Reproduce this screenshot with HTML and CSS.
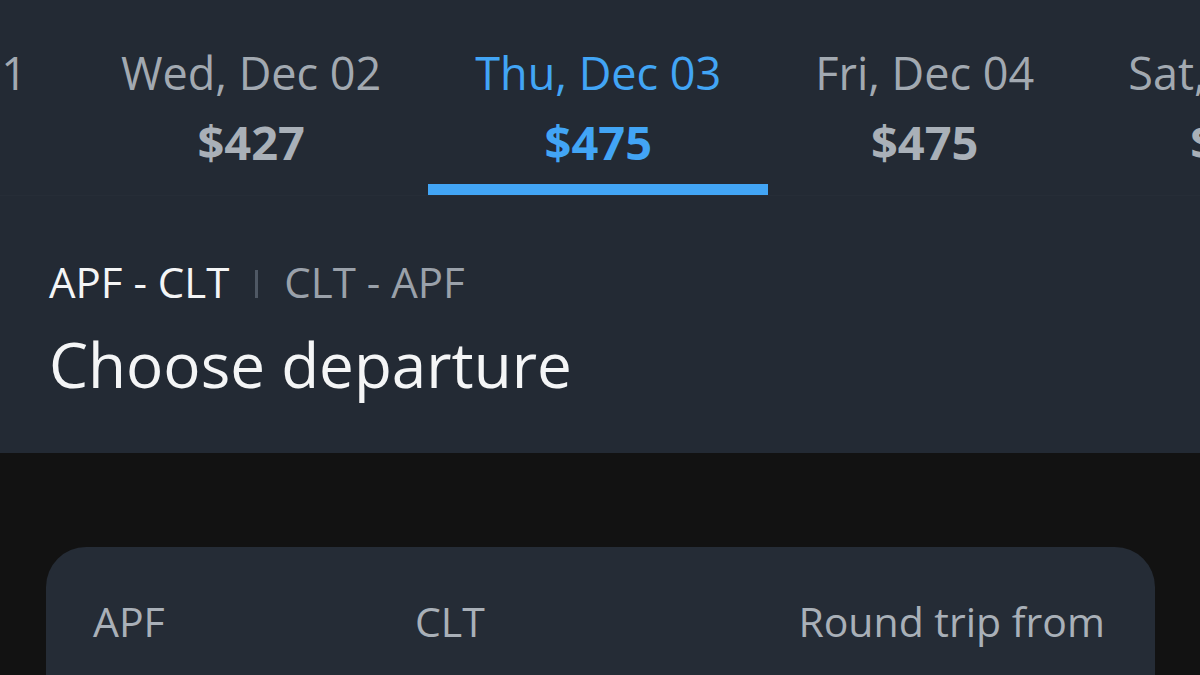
FILE: index.html
```html
<!DOCTYPE html>
<html lang="en">
<head>
  <meta charset="UTF-8" />
  <title>Choose departure</title>
  <link rel="stylesheet" href="styles.css">
</head>
<body>
  <header class="top">
    <nav class="dates">
      <div class="date-clip">
        <div class="tab">
          <div class="day">Tue, Dec 01</div>
          <div class="price">$427</div>
        </div>
      </div>
      <div class="tab">
        <div class="day">Wed, Dec 02</div>
        <div class="price">$427</div>
      </div>
      <div class="tab active">
        <div class="day">Thu, Dec 03</div>
        <div class="price">$475</div>
      </div>
      <div class="tab">
        <div class="day">Fri, Dec 04</div>
        <div class="price">$475</div>
      </div>
      <div class="tab">
        <div class="day">Sat, Dec 05</div>
        <div class="price">$475</div>
      </div>
    </nav>

    <div class="heading">
      <div class="legs">
        <span class="leg current">APF - CLT</span>
        <span class="sep"></span>
        <span class="leg">CLT - APF</span>
      </div>
      <h1>Choose departure</h1>
    </div>
  </header>

  <main class="list">
    <div class="card">
      <div class="card-row">
        <span class="from">APF</span>
        <span class="to">CLT</span>
        <span class="fare">Round trip from</span>
      </div>
    </div>
  </main>
</body>
</html>
```

FILE: styles.css
```css
html, body {
  margin: 0;
  padding: 0;
  height: 100%;
}
body {
  background: #121212;
  font-family: "Open Sans", "Noto Sans", sans-serif;
  overflow: hidden;
}
.top {
  background: #232a34;
  height: 453px;
}
.dates {
  display: flex;
  height: 195px;
  border-bottom: 1px solid #262d37;
  white-space: nowrap;
  overflow: hidden;
}
.date-clip {
  width: 74px;
  flex: none;
  display: flex;
  justify-content: flex-end;
  overflow: hidden;
}
.tab {
  flex: none;
  padding: 0 47px;
  text-align: center;
  box-sizing: border-box;
  height: 195px;
  border-bottom: 11px solid transparent;
}
.day {
  font-size: 45px;
  color: #a2a9b1;
  padding-top: 43px;
  line-height: 60px;
}
.price {
  font-size: 47px;
  font-weight: 700;
  color: #a9b0b8;
  line-height: 60px;
  margin-top: 9px;
}
.tab.active {
  border-bottom-color: #42a5f5;
}
.tab.active .day,
.tab.active .price {
  color: #42a5f5;
}
.heading {
  padding: 56px 49px 0;
}
.legs {
  display: flex;
  align-items: center;
  font-size: 42px;
  line-height: 60px;
  color: #9aa1aa;
}
.leg.current {
  color: #f4f5f6;
}
.sep {
  width: 3px;
  height: 28px;
  background: #4f5864;
  margin: 4px 26px 0 26px;
}
h1 {
  margin: 12px 0 0;
  font-size: 62px;
  font-weight: 400;
  color: #f4f5f6;
  line-height: 80px;
}
.list {
  padding: 94px 45px 0 46px;
}
.card {
  background: #252c36;
  border-radius: 40px 40px 0 0;
  height: 128px;
  box-sizing: border-box;
  padding: 44px 50px 0 47px;
}
.card-row {
  display: flex;
  font-size: 41px;
  line-height: 60px;
  color: #a9b0b8;
}
.from {
  width: 322px;
}
.to {
  flex: 1;
}
```
